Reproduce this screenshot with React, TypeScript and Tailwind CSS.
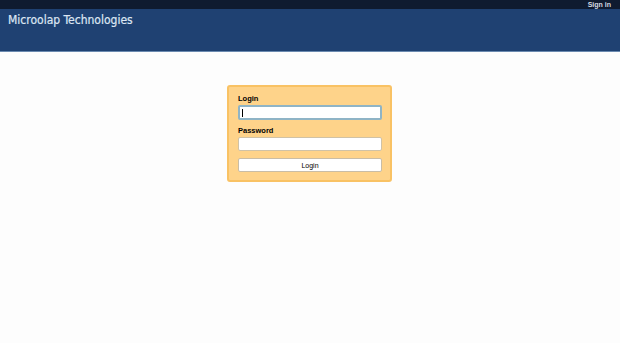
import React from "react";

export default function App() {
  return (
    <div className="w-[620px] h-[343px] bg-[#fdfdfd] overflow-hidden" style={{ fontFamily: "'Liberation Sans', Arial, sans-serif" }}>
      <div className="h-[9px] bg-[#0f1b30] flex justify-end items-center pr-[9px]">
        <span className="text-[7px] font-bold text-[#d5dbe4] leading-none">Sign in</span>
      </div>
      <div className="h-[43px] bg-[#1f4172] border-b border-[#6b8ab0] px-[8px] pt-[3px]">
        <div className="text-[12px] text-[#dde6f2] leading-[16px]" style={{ fontFamily: "'DejaVu Sans Condensed', 'DejaVu Sans', sans-serif", WebkitTextStroke: "0.2px #dde6f2" }}>
          Microolap Technologies
        </div>
      </div>
      <div className="flex justify-center pt-[33px] pr-[1px]">
        <div className="w-[165px] h-[97px] bg-[#fed38a] border-[2px] border-[#f9c264] rounded-[3px] pl-[9px] pr-[8px] pt-[7px]">
          <div className="text-[7.5px] font-bold text-black leading-[10px]">Login</div>
          <div className="mt-[1px] h-[15px] bg-white border-[2px] border-[#8fb4c6] rounded-[2px] flex items-center pl-[2px]">
            <span className="w-[1px] h-[8px] bg-black" />
          </div>
          <div className="mt-[6px] text-[7.5px] font-bold text-black leading-[10px]">Password</div>
          <div className="mt-[1px] h-[14px] bg-white border border-[#d0c2a6] rounded-[2px]" />
          <div className="mt-[7px] h-[14px] bg-white border border-[#c9bda6] rounded-[2px] flex items-center justify-center text-[7px] text-black leading-none">
            Login
          </div>
        </div>
      </div>
    </div>
  );
}
